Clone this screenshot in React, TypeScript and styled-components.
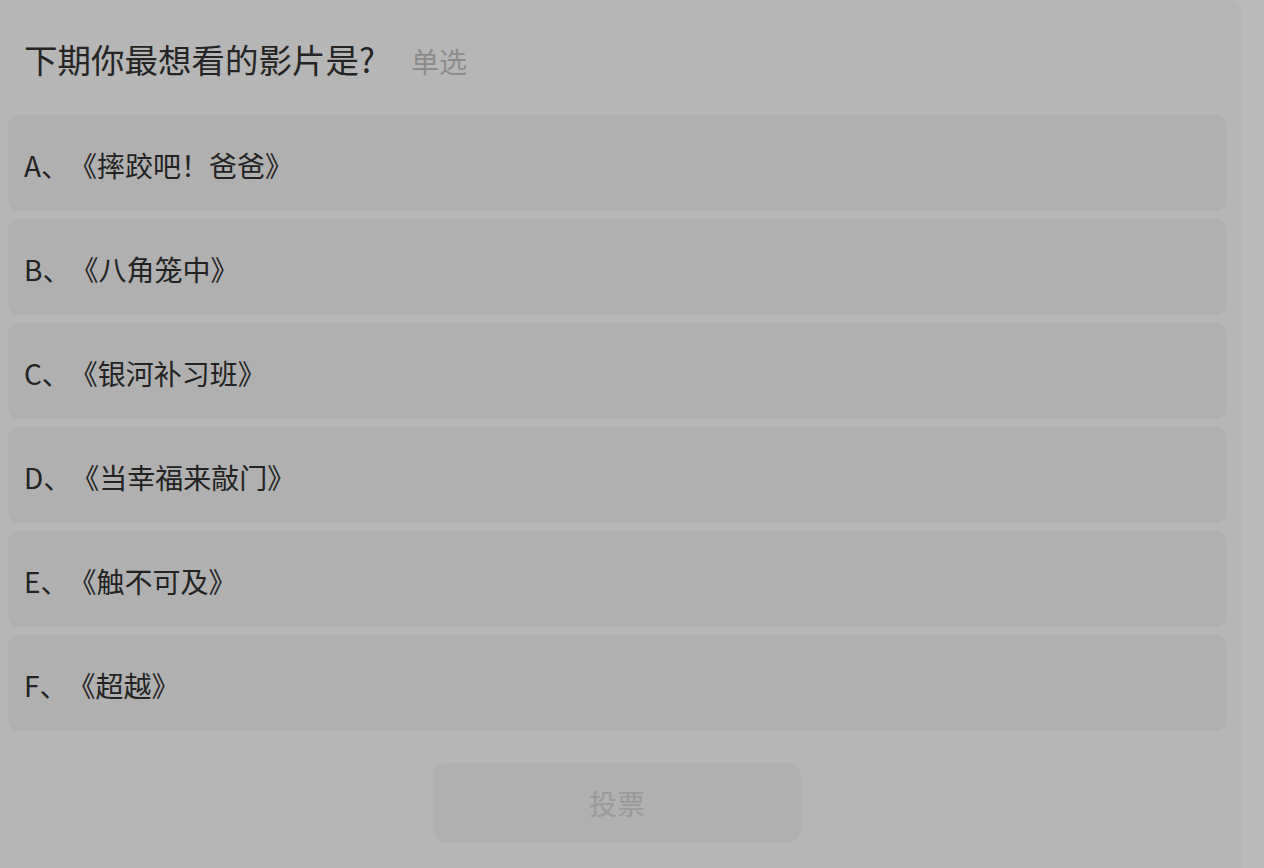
import React, { useState } from 'react';
import styled, { createGlobalStyle } from 'styled-components';

const GlobalStyle = createGlobalStyle`
  html, body {
    margin: 0;
    padding: 0;
    background-color: #BBBBBB;
  }
  body {
    font-family: 'Noto Sans CJK SC', 'Noto Sans', sans-serif;
    text-spacing-trim: space-all;
  }
`;

const Page = styled.div`
  display: flex;
  min-height: 868px;
  background-color: #BBBBBB;
`;

const Panel = styled.div`
  display: flex;
  flex-direction: column;
  width: 1242px;
  min-height: 868px;
  background-color: #B6B6B6;
  border-top-right-radius: 12px;
  box-sizing: border-box;
`;

const Header = styled.div`
  display: flex;
  align-items: baseline;
  padding: 35px 24px 30px;
`;

const Title = styled.h1`
  font-family: 'Noto Sans CJK SC', sans-serif;
  font-size: 33.5px;
  font-weight: 400;
  line-height: 48px;
  color: #252525;
  margin: 0;
`;

const Tag = styled.span`
  font-family: 'Noto Sans CJK SC', sans-serif;
  font-size: 28px;
  line-height: 48px;
  color: #8C8C8C;
  margin-left: 36px;
`;

const OptionList = styled.div`
  display: flex;
  flex-direction: column;
  gap: 8px;
  padding: 0 16px 0 8px;
`;

const Option = styled.button<{ selected: boolean }>`
  display: flex;
  align-items: center;
  height: 96px;
  padding: 3px 16px 0;
  border: none;
  border-radius: 10px;
  background-color: ${props => (props.selected ? '#A9A9A9' : '#B0B0B0')};
  font-family: 'Noto Sans CJK SC', sans-serif;
  font-size: 28px;
  color: #232323;
  text-align: left;
  text-spacing-trim: space-all;
  cursor: pointer;
`;

const Footer = styled.div`
  display: flex;
  justify-content: center;
  padding: 32px 16px 25px 8px;
`;

const VoteButton = styled.button<{ active: boolean }>`
  width: 368px;
  height: 80px;
  border: none;
  border-radius: 14px;
  background-color: #B0B0B0;
  font-family: 'Noto Sans CJK SC', sans-serif;
  font-size: 28px;
  color: ${props => (props.active ? '#555555' : '#9A9A9A')};
  cursor: pointer;
`;

const options = [
  'A、《摔跤吧！爸爸》',
  'B、《八角笼中》',
  'C、《银河补习班》',
  'D、《当幸福来敲门》',
  'E、《触不可及》',
  'F、《超越》',
];

const App: React.FC = () => {
  const [picked, setPicked] = useState<number | null>(null);

  return (
    <Page>
      <GlobalStyle />
      <Panel>
        <Header>
          <Title>下期你最想看的影片是?</Title>
          <Tag>单选</Tag>
        </Header>
        <OptionList>
          {options.map((label, index) => (
            <Option
              key={label}
              selected={picked === index}
              onClick={() => setPicked(index)}
            >
              {label}
            </Option>
          ))}
        </OptionList>
        <Footer>
          <VoteButton active={picked !== null}>投票</VoteButton>
        </Footer>
      </Panel>
    </Page>
  );
};

export default App;
